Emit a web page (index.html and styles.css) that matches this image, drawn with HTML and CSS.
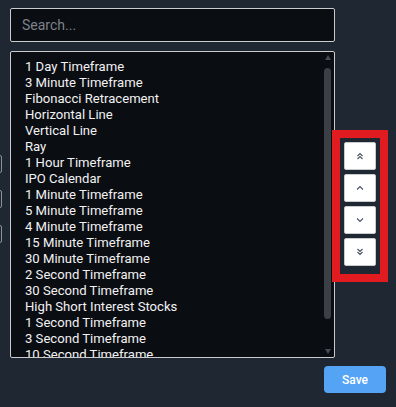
FILE: index.html
```html
<!DOCTYPE html>
<html lang="en">

<head>
    <meta charset="UTF-8">
    <meta name="viewport" content="width=device-width, initial-scale=1.0">
    <title>Sort Items</title>
    <link rel="stylesheet" href="styles.css">
</head>

<body>
    <div class="side-tools">
        <span class="side-btn"></span>
        <span class="side-btn"></span>
        <span class="side-btn"></span>
    </div>

    <div class="panel">
        <input class="search" type="text" placeholder="Search...">

        <div class="list-row">
            <div class="list-box">
                <ul class="items">
                    <li>1 Day Timeframe</li>
                    <li>3 Minute Timeframe</li>
                    <li>Fibonacci Retracement</li>
                    <li>Horizontal Line</li>
                    <li>Vertical Line</li>
                    <li>Ray</li>
                    <li>1 Hour Timeframe</li>
                    <li>IPO Calendar</li>
                    <li>1 Minute Timeframe</li>
                    <li>5 Minute Timeframe</li>
                    <li>4 Minute Timeframe</li>
                    <li>15 Minute Timeframe</li>
                    <li>30 Minute Timeframe</li>
                    <li>2 Second Timeframe</li>
                    <li>30 Second Timeframe</li>
                    <li>High Short Interest Stocks</li>
                    <li>1 Second Timeframe</li>
                    <li>3 Second Timeframe</li>
                    <li>10 Second Timeframe</li>
                </ul>
                <div class="scrollbar">
                    <span class="arrow up"></span>
                    <span class="thumb"></span>
                    <span class="arrow down"></span>
                </div>
            </div>

            <div class="move-buttons">
                <button class="move-btn" title="Move to top">
                    <svg width="8" height="8" viewBox="0 0 8 8"><path d="M1.5 4 L4 1.5 L6.5 4 M1.5 7 L4 4.5 L6.5 7" fill="none" stroke="#4a5260" stroke-width="1.1"/></svg>
                </button>
                <button class="move-btn" title="Move up">
                    <svg width="8" height="8" viewBox="0 0 8 8"><path d="M1 5.5 L4 2.5 L7 5.5" fill="none" stroke="#4a5260" stroke-width="1.1"/></svg>
                </button>
                <button class="move-btn" title="Move down">
                    <svg width="8" height="8" viewBox="0 0 8 8"><path d="M1 2.5 L4 5.5 L7 2.5" fill="none" stroke="#4a5260" stroke-width="1.1"/></svg>
                </button>
                <button class="move-btn" title="Move to bottom">
                    <svg width="8" height="8" viewBox="0 0 8 8"><path d="M1.5 1 L4 3.5 L6.5 1 M1.5 4 L4 6.5 L6.5 4" fill="none" stroke="#4a5260" stroke-width="1.1"/></svg>
                </button>
            </div>
        </div>

        <div class="footer">
            <button class="save-btn">Save</button>
        </div>
    </div>
</body>

</html>
```

FILE: styles.css
```css
body {
    font-family: Roboto, sans-serif;
    margin: 0;
    background-color: #1f2732;
    width: 396px;
    height: 407px;
    position: relative;
    overflow: hidden;
}

.panel {
    padding: 8px 10px 0 10px;
    display: flex;
    flex-direction: column;
}

.search {
    font-family: Roboto, sans-serif;
    width: 325px;
    height: 34px;
    box-sizing: border-box;
    background-color: #0a0d12;
    border: 1px solid #c9cbce;
    border-radius: 2px;
    padding: 0 11px;
    font-size: 14px;
    color: #e8e8e8;
    outline: none;
}

.search::placeholder {
    color: #7d838c;
}

.list-row {
    display: flex;
    align-items: center;
    margin-top: 9px;
}

.list-box {
    width: 325px;
    height: 307px;
    flex-shrink: 0;
    box-sizing: border-box;
    background-color: #0a0d12;
    border: 1px solid #c9cbce;
    border-radius: 2px;
    display: flex;
    overflow: hidden;
}

.items {
    list-style: none;
    margin: 0;
    padding: 7px 0 0 14px;
    flex: 1;
    color: #f2f2f2;
    font-size: 13.1px;
    line-height: 16px;
    overflow: hidden;
}

.items li {
    white-space: nowrap;
}

.scrollbar {
    width: 7px;
    margin-right: 3px;
    display: flex;
    flex-direction: column;
    align-items: center;
    padding-top: 3px;
}

.arrow {
    width: 0;
    height: 0;
    border-left: 3.5px solid transparent;
    border-right: 3.5px solid transparent;
}

.arrow.up {
    border-bottom: 5px solid #464b53;
}

.arrow.down {
    border-top: 5px solid #464b53;
    margin-top: 30px;
}

.thumb {
    width: 7px;
    height: 251px;
    margin-top: 8px;
    background-color: #3b3f46;
    border-radius: 3.5px;
}

.move-buttons {
    display: flex;
    flex-direction: column;
    gap: 4px;
    padding: 4px 4px 8px 4px;
    margin-left: 5px;
    margin-top: 3px;
    outline: 8px solid #e11b1f;
}

.move-btn {
    width: 32px;
    height: 28px;
    padding: 0;
    background-color: #ffffff;
    border: 1px solid #c9cbce;
    border-radius: 2px;
    display: flex;
    justify-content: center;
    align-items: center;
    cursor: pointer;
}

.footer {
    display: flex;
    justify-content: flex-end;
    margin-top: 8px;
}

.save-btn {
    font-family: Roboto, sans-serif;
    width: 62px;
    height: 27px;
    background-color: #55a3f4;
    color: #ffffff;
    font-size: 12px;
    font-weight: 500;
    border: none;
    border-radius: 4px;
    cursor: pointer;
}

/* edges of a toolbar that sits off the left side */
.side-tools {
    position: absolute;
    left: -26px;
    top: 155px;
    display: flex;
    flex-direction: column;
    gap: 17px;
}

.side-btn {
    width: 28px;
    height: 18px;
    border: 1px solid #8c9199;
    border-radius: 2px;
    box-sizing: border-box;
}
```
